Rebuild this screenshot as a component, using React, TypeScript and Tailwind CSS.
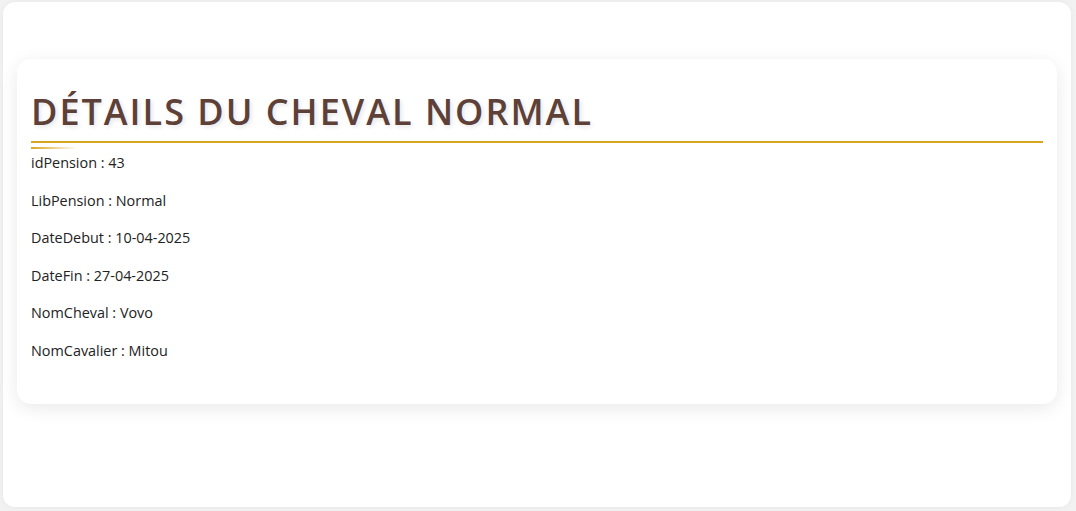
const rows = [
  ["idPension", "43"],
  ["LibPension", "Normal"],
  ["DateDebut", "10-04-2025"],
  ["DateFin", "27-04-2025"],
  ["NomCheval", "Vovo"],
  ["NomCavalier", "Mitou"],
];

export default function App() {
  return (
    <div className="min-h-screen bg-[#f2f2f2] p-[2px_5px_4px_3px] font-['Open_Sans',sans-serif]">
      <div className="h-[505px] rounded-[12px] bg-white px-[14px] pt-[57px] shadow-[0_0_6px_rgba(0,0,0,0.05)]">
        <div className="rounded-[14px] bg-white px-[14px] pt-[28px] pb-[26px] shadow-[0_4px_18px_rgba(0,0,0,0.09)]">
          <h1 className="border-b-2 border-[#daa520] pb-[4px] text-[36px] leading-[50px] font-semibold tracking-[2px] text-[#5d4037] uppercase [text-shadow:2px_2px_4px_rgba(0,0,0,0.1)]">
            Détails du cheval Normal
          </h1>
          <div className="mt-[4px] h-[2px] w-[46px] bg-gradient-to-r from-[#daa520] to-transparent" />
          <div className="mt-[3px]">
            {rows.map(([k, v]) => (
              <p key={k} className="mb-[16px] text-[14.4px] leading-[21.6px] text-[#222]">
                {k} : {v}
              </p>
            ))}
          </div>
        </div>
      </div>
    </div>
  );
}
